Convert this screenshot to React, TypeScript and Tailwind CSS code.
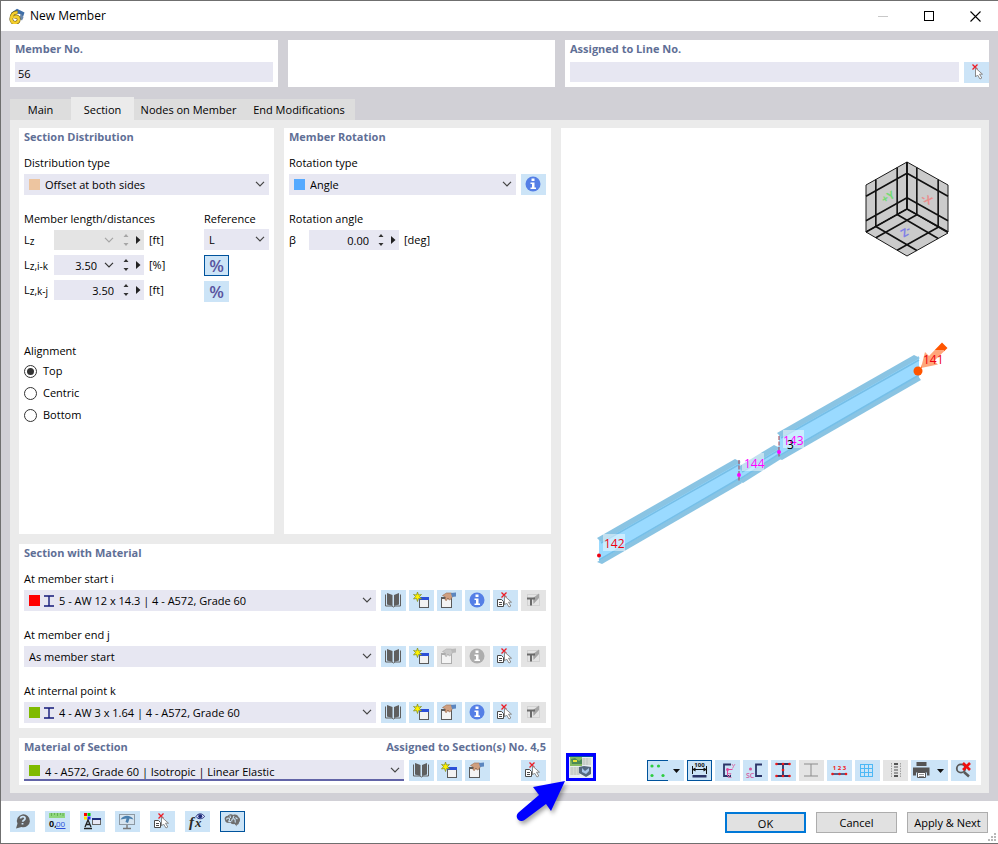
import { useState, type ReactNode } from 'react';
import clsx from 'clsx';

/* ---------- icons, all drawn on the 25x21 button face ---------- */

function Face({ children, className }: { children: ReactNode; className?: string }) {
  return (
    <svg viewBox="0 0 25 21" className={clsx('h-[21px] w-[25px] shrink-0', className)} fill="none" aria-hidden="true">
      {children}
    </svg>
  );
}

const RedCross = ({ x, y }: { x: number; y: number }) => (
  <path d={`M${x} ${y}l5 5m0 -5l-5 5`} stroke="#ee1c25" strokeWidth="1.3" />
);

const Cursor = ({ x, y }: { x: number; y: number }) => (
  <path
    d={`M${x} ${y}v9l2-2 2.5 4 1.8-1-2.3-3.8h3z`}
    fill="#fff"
    stroke="#8a8a8a"
    strokeWidth="1"
    strokeLinejoin="round"
  />
);

const BookIcon = () => (
  <Face>
    <path d="M4.5 4.5v11.5h6.5l1.5 1 1.5-1h5.500V4.500" stroke="#5f5f5f" />
    <path d="M6 3l5.500 2v11L6 14.500z" fill="#5f5f5f" />
    <path d="M18 3l-5 2v11l5-1.500z" fill="#5f5f5f" />
  </Face>
);

const NewIcon = () => (
  <Face>
    <rect x="10.500" y="7.500" width="9" height="10" fill="#f2f2f2" stroke="#5a5a5a" />
    <rect x="10" y="7" width="10" height="3" fill="#2b4fd8" />
    <path d="M8.500 2l1 3 3-.500-2 2 2 2.500-3-.500-1 3-1-3-3 .500 2-2.500-2-2 3 .500z" fill="#fff200" stroke="#7d8a1c" strokeWidth=".7" />
  </Face>
);

const EditIcon = ({ off }: { off?: boolean }) => (
  <Face>
    <rect x="4.500" y="7.500" width="10" height="10" fill="#f4f4f4" stroke={off ? '#adadad' : '#5a5a5a'} />
    <rect x="4" y="7" width="11" height="2" fill={off ? '#adadad' : '#5a5a5a'} />
    <path
      d="M5.500 5.500l4-2.500h5l1.500 3-2.500 3.500-1.500.500-1-2-1.500 2.500-1.500-.500.500-3z"
      fill={off ? '#c9c9c9' : '#cf9f80'}
      stroke={off ? '#adadad' : '#9c6b4e'}
      strokeWidth=".6"
    />
    <path d="M14 3l5-.500v4l-4 .500z" fill={off ? '#b9b9b9' : '#5b86c0'} />
  </Face>
);

const InfoIcon = ({ off }: { off?: boolean }) => (
  <Face>
    <circle cx="12" cy="10" r="7.500" fill={off ? '#adadad' : '#557fe6'} />
    <rect x="10.500" y="4.500" width="3" height="2.500" fill="#fff" />
    <path d="M9.500 8.500h4v5h1.500v1.500h-5.500v-1.500h1.500v-3.500h-1.500z" fill="#fff" />
  </Face>
);

const PickIcon = () => (
  <Face>
    <path d="M4.500 9.500h4l2 2v5h-6z" fill="#fff" stroke="#4a4a4a" />
    <path d="M6 12.500h3M6 14.500h3" stroke="#4a4a4a" />
    <RedCross x={8.500} y={2.500} />
    <Cursor x={11.500} y={6} />
  </Face>
);

const ClearLineIcon = () => (
  <Face>
    <RedCross x={8.500} y={2.500} />
    <Cursor x={11.500} y={6} />
  </Face>
);

const TrimIcon = () => (
  <Face>
    <rect x="6.500" y="4.500" width="12" height="11" stroke="#d2d2d2" />
    <path d="M12 8l6-4.500v4.500l-5.500 6z" fill="#a5a5a5" />
    <path d="M6 8.500h8M10 8.500v7" stroke="#6a6a6a" strokeWidth="2" />
  </Face>
);

const HelpIcon = () => (
  <Face>
    <path d="M6 17.500l1.500-5a6.500 6.500 0 1 1 4 3.500z" fill="#5f5f5f" />
    <path d="M10.500 7.500c.3-2.500 5-2.500 4.500.3-.3 1.500-2.300 1.400-2.300 3M12.500 12v1.500" stroke="#cce4f7" strokeWidth="1.800" />
  </Face>
);

const UnitsIcon = () => (
  <Face>
    <rect x="4" y="2" width="16" height="5" fill="#8fd67e" />
    <path d="M6.500 2v3M9.500 2v2M12.500 2v3M15.500 2v2M18 2v3" stroke="#5aa84b" strokeWidth=".8" />
    <text x="4" y="16" fontSize="9" fontWeight="700" fontFamily="Open Sans, sans-serif" fill="#111">0,</text>
    <text x="11" y="16" fontSize="8" fontFamily="Open Sans, sans-serif" fill="#2b4fd8">00</text>
    <path d="M11 17.500h9.500" stroke="#2b4fd8" />
  </Face>
);

const DisplayIcon = () => (
  <Face>
    <rect x="4" y="2" width="3" height="3" fill="#f00" />
    <rect x="7.500" y="2" width="3" height="3" fill="#0c0" />
    <rect x="4" y="5.500" width="3" height="3" fill="#ffe600" />
    <rect x="7.500" y="5.500" width="3" height="3" fill="#22f" />
    <path d="M5 16l3-7 3 7M6 13.500h4M4 17.500h8" stroke="#222" strokeWidth="1.300" />
    <rect x="12.500" y="7.500" width="8" height="6" fill="#e8e8f4" stroke="#666" />
    <rect x="12" y="7" width="9" height="2" fill="#1f2f80" />
  </Face>
);

const ScreenIcon = () => (
  <Face>
    <rect x="4.500" y="3.500" width="15" height="10" fill="#d6e4ef" stroke="#8d99a3" />
    <path d="M5.500 8.500c3-5 10-5 13 0l-4-1-1.500 4.500-2.500-1 1-3.500z" fill="#4a7fae" />
    <path d="M12 14v3M8 17.500h8" stroke="#777" strokeWidth="1.400" />
  </Face>
);

const FormulaIcon = () => (
  <Face>
    <text x="4" y="16" fontSize="15" fontStyle="italic" fontWeight="700" fontFamily="Liberation Serif, serif" fill="#2a2a2a">f</text>
    <text x="10" y="16" fontSize="13" fontStyle="italic" fontWeight="700" fontFamily="Liberation Serif, serif" fill="#2a2a2a">x</text>
    <path d="M11 5.500c2-3.500 6.500-3.500 8.500 0-2 3-6.500 3-8.500 0z" fill="#dfe4ff" stroke="#1e2a78" />
    <circle cx="15.200" cy="5.200" r="2" fill="#1e2a78" />
  </Face>
);

const BrainIcon = () => (
  <Face>
    <path
      d="M5 9c-1-2 .5-4 2.500-4C9 3 12 3 13 4c2.500-1 5 0 5.500 2 2 1 2 4 .5 5.500 0 2-1.500 2.500-2.500 2.300l.5 1.700-2.500-2.500c-2 .5-3.500-.2-4-1.500C8 12.500 5 11.500 5 9z"
      fill="#6f6f6f"
    />
    <path
      d="M6.500 8.500c.5-2 2.500-2 3-.500s-1.500 2-.5 3M10 4.500l.5 2.500M12 10.500c-1-2 1-3.500 2.500-2.500s0 2.500 1 3.500M14 5l-1 2M9 10.500h2M15.500 6.500l2 1.500"
      stroke="#cce4f7"
      strokeWidth="1.100"
    />
  </Face>
);

const NodesIcon = () => (
  <Face>
    {[[4, 6], [10.500, 6], [4, 15.500], [15, 15.500]].map(([x, y]) => (
      <circle key={`${x}-${y}`} cx={x} cy={y} r="1.600" fill="#2ecc40" />
    ))}
  </Face>
);

const DimensionIcon = () => (
  <Face>
    <text x="12.500" y="7" fontSize="6" fontWeight="700" textAnchor="middle" fontFamily="Open Sans, sans-serif" fill="#111">100</text>
    <path d="M5.500 6v8M19.500 6v8M5 9.500h15" stroke="#111" />
    <path d="M5 9.500l3.500-2v4zM20 9.500l-3.500-2v4z" fill="#111" />
    <rect x="5.500" y="15" width="14" height="2.500" fill="#2c3568" />
  </Face>
);

const AxesIcon = () => (
  <Face>
    <path d="M16 4.500H9V16h7" stroke="#2c3568" strokeWidth="1.800" />
    <path d="M12.500 16V9.500h5" stroke="#e0489c" />
    <circle cx="12.500" cy="9.500" r="1.500" fill="#e0489c" />
    <path d="M17 4l1.500 2.500L20 4M18.500 6.500l-1 2M13 13.500h3l-3 4h3.500" stroke="#d77fb4" />
  </Face>
);

const ShearCenterIcon = () => (
  <Face>
    <path d="M19 4.500h-6v11.500h6" stroke="#2c3568" strokeWidth="1.800" />
    <circle cx="7.500" cy="9" r="1.500" fill="#d4559c" />
    <text x="3" y="18" fontSize="7" fontWeight="600" fontFamily="Open Sans, sans-serif" fill="#d4559c">SC</text>
  </Face>
);

const BeamIcon = ({ off }: { off?: boolean }) => (
  <Face>
    <path d="M5 4h14M5 16h14M12 4v12" stroke={off ? '#8c8c8c' : '#2c3568'} strokeWidth={off ? 1 : 1.800} />
    {!off &&
      [[5.500, 4], [12, 4], [18.500, 4], [12, 10], [5.500, 16], [12, 16], [18.500, 16]].map(([x, y]) => (
        <circle key={`${x}-${y}`} cx={x} cy={y} r="1.300" fill="#f01818" />
      ))}
  </Face>
);

const NumberingIcon = () => (
  <Face>
    <text x="12.500" y="10" fontSize="6" fontWeight="700" textAnchor="middle" fontFamily="Open Sans, sans-serif" fill="#f01818">1 2 3</text>
    <path d="M5 14h15" stroke="#2c3568" strokeWidth="1.500" />
    <circle cx="5.500" cy="14" r="1.300" fill="#f01818" />
    <circle cx="12.500" cy="14" r="1.300" fill="#f01818" />
    <circle cx="19" cy="14" r="1.300" fill="#f01818" />
  </Face>
);

const GridIcon = () => (
  <Face>
    <path d="M6 4.500h12M6 8.500h12M6 12.500h12M6 16.500h12M5.500 4v13M9.500 4v13M13.500 4v13M17.500 4v13" stroke="#4db8f5" />
  </Face>
);

const SlicesIcon = () => (
  <Face>
    <path d="M11 4h4M11 16h4" stroke="#555" strokeWidth="2" />
    <path d="M11 7h4M11 10h4M11 13h4" stroke="#9a9a9a" strokeWidth="2" />
    <path d="M8.500 3v15M17.500 3v15" stroke="#a0a0a0" strokeDasharray="1.500 1" />
  </Face>
);

const PrinterIcon = () => (
  <Face>
    <path d="M5.500 2h10v4h-10zM2 7.500h16.500v8H16v-3H5v3H2z" fill="#555" />
    <path d="M6.500 12.500h8v5h-8z" fill="#fff" stroke="#555" />
    <path d="M8 14.500h5M8 16.500h5" stroke="#777" strokeWidth=".8" />
  </Face>
);

const ResetViewIcon = () => (
  <Face>
    <circle cx="10" cy="8.500" r="4.200" stroke="#5a5a5a" strokeWidth="1.800" />
    <path d="M13 12l5 4.500" stroke="#5a5a5a" strokeWidth="2.500" />
    <path d="M12 3l7 7m0-7l-7 7" stroke="#f01010" strokeWidth="2.600" />
  </Face>
);

const AppIcon = () => (
  <svg viewBox="0 0 16 16" className="size-4" fill="none" aria-hidden="true">
    <path d="M2 5L8 .800 15.500 4.500 14 9l-3-3z" fill="#3f6ea8" />
    <path d="M12 5.500l2.500 4-1.500 3-3-2z" fill="#6b87ab" />
    <path d="M8.500 4.500C5 4.200 2.300 6.500 2.300 11c0 5.200 7.400 5 7.400.500 0-3.500-4-3.600-5-1.500" stroke="#6b5a12" strokeWidth="3.800" />
    <path d="M8.500 4.500C5 4.200 2.300 6.500 2.300 11c0 5.200 7.400 5 7.400.500 0-3.500-4-3.600-5-1.500" stroke="#f5cf2e" strokeWidth="2.600" />
  </svg>
);

const ProfileIcon = () => (
  <svg viewBox="0 0 10 12" className="h-3 w-[10px]" fill="none" aria-hidden="true">
    <path d="M0 1h10M0 11h10M5 1v10" stroke="#151a7a" strokeWidth="1.400" />
  </svg>
);

const Chevron = ({ className }: { className?: string }) => (
  <svg viewBox="0 0 10 6" className={clsx('h-[6px] w-[10px]', className)} fill="none" aria-hidden="true">
    <path d="M1 .800l4 4 4-4" stroke="currentColor" strokeWidth="1.200" />
  </svg>
);

/* ---------- controls ---------- */

function IconButton({ label, off, active, children }: { label: string; off?: boolean; active?: boolean; children: ReactNode }) {
  return (
    <button
      type="button"
      aria-label={label}
      disabled={off}
      className={clsx(
        'relative h-[21px] w-[25px] shrink-0',
        off ? 'bg-[#e4e4e4]' : 'bg-[#cce4f7]',
        active && 'outline outline-1 -outline-offset-1 outline-[#00539c]'
      )}
    >
      {children}
    </button>
  );
}

function MenuButton({ label, active, children }: { label: string; active?: boolean; children: ReactNode }) {
  return (
    <button type="button" aria-label={label} className="flex h-[21px] w-[37px] shrink-0 items-center bg-[#cce4f7]">
      <span className={clsx('flex h-full w-[21px] items-center', active && 'border border-r-0 border-[#00539c]')}>
        {children}
      </span>
      <svg viewBox="0 0 8 4" className="ml-[5px] h-1 w-2" aria-hidden="true">
        <path d="M0 0h7L3.500 4z" fill="#111" />
      </svg>
    </button>
  );
}

type SelectProps = {
  id: string;
  value: string;
  swatch?: 'peach' | 'blue' | 'red' | 'green';
  profile?: boolean;
  focused?: boolean;
  className?: string;
};

const swatches = {
  peach: 'bg-[#edc5a0]',
  blue: 'bg-[#55aaff]',
  red: 'bg-[#ff0000]',
  green: 'bg-[#7fba00]',
};

function Select({ id, value, swatch, profile, focused, className }: SelectProps) {
  return (
    <div className={clsx('relative h-[21px] min-w-0 bg-[#e7e7f2]', className)}>
      <select
        id={id}
        defaultValue={value}
        className={clsx(
          'block h-full w-full appearance-none pr-5 outline-none',
          !swatch && 'pl-[5px]',
          swatch && !profile && 'pl-[21px]',
          profile && 'pl-[35px]',
          focused ? 'border-b-2 border-[#6264a7] pt-1' : 'pt-[2px]'
        )}
      >
        <option>{value}</option>
      </select>
      {swatch && (
        <span className="pointer-events-none absolute inset-y-0 left-[5px] flex items-center gap-1">
          <span className={clsx('size-[11px]', swatches[swatch])} />
          {profile && <ProfileIcon />}
        </span>
      )}
      <Chevron className="pointer-events-none absolute right-1 top-[7px] text-[#444]" />
    </div>
  );
}

function NumberField({ label, value, list, off }: { label: string; value: string; list?: boolean; off?: boolean }) {
  const [text, setText] = useState(value);

  return (
    <div className={clsx('flex h-5 w-[90px] items-center', off ? 'bg-[#e4e4e4] text-[#a5a5a5]' : 'bg-[#e7e7f2] text-[#333]')}>
      <input
        aria-label={label}
        value={text}
        disabled={off}
        onChange={(e) => setText(e.target.value)}
        className="min-w-0 flex-1 pt-[2px] text-right text-black outline-none"
      />
      {list && <Chevron className="ml-[7px]" />}
      <button type="button" aria-label={`${label} step`} disabled={off} className="ml-2 flex w-2 justify-center">
        <svg viewBox="0 0 6 12" className="h-3 w-[6px]" fill="currentColor" aria-hidden="true">
          <path d="M3 0l2.500 3h-5zM3 12l2.500-3h-5z" />
        </svg>
      </button>
      <button type="button" aria-label={`${label} more`} className="ml-1 mr-[2px] flex w-2 justify-center text-[#222]">
        <svg viewBox="0 0 5 8" className="h-2 w-[5px]" fill="currentColor" aria-hidden="true">
          <path d="M0 0l4.500 4L0 8z" />
        </svg>
      </button>
    </div>
  );
}

const Heading = ({ children }: { children: ReactNode }) => (
  <h2 className="h-[18px] font-bold leading-[18px] text-[#5f6f96]">{children}</h2>
);

/* ---------- 3D preview ---------- */

type Pt = [number, number];

// one visible side of the orientation cube, split into 3x3 tiles
function CubeFace({ o, u, v }: { o: Pt; u: Pt; v: Pt }) {
  const at = (a: number, b: number) => `${o[0] + u[0] * a + v[0] * b} ${o[1] + u[1] * a + v[1] * b}`;
  const stops = [0.24, 0.76];
  return (
    <g>
      <path d={`M${at(0, 0)}L${at(1, 0)}L${at(1, 1)}L${at(0, 1)}z`} fill="#cbcbcb" stroke="#1a1a1a" strokeWidth="1" />
      {stops.map((s) => (
        <path key={s} d={`M${at(s, 0)}L${at(s, 1)}M${at(0, s)}L${at(1, s)}`} stroke="#111" strokeWidth="1.600" />
      ))}
    </g>
  );
}

function Beam({ x1, y1, x2, y2, h }: { x1: number; y1: number; x2: number; y2: number; h: number }) {
  return (
    <g>
      <path d={`M${x1} ${y1 + 3}L${x2} ${y2}V${y2 + h - 4}L${x1} ${y1 + h}z`} fill="#9adaff" />
      <path d={`M${x1 - 2} ${y1 + 1}L${x2 - 5} ${y2 - 1}L${x2 + 1} ${y2 + 2}L${x1 + 2} ${y1 + 5}z`} fill="#8ac4e3" />
      <path d={`M${x1 + 2} ${y1 + 6}L${x2} ${y2 + 4}`} stroke="#76bfe8" strokeWidth="1.500" />
      <path d={`M${x1 - 2} ${y1 + h}L${x2 - 1} ${y2 + h - 6}L${x2 + 2} ${y2 + h - 2}L${x1 + 3} ${y1 + h + 2}z`} fill="#8ac4e3" />
      <path d={`M${x1} ${y1 + h - 2}L${x2} ${y2 + h - 7}`} stroke="#76bfe8" strokeWidth="1.500" />
    </g>
  );
}

function Scene() {
  return (
    <svg viewBox="561 128 420 625" preserveAspectRatio="xMidYMid meet" className="h-full w-full" fill="none" role="img" aria-label="Member preview">
      <CubeFace o={[907, 162]} u={[-41, 23]} v={[0, 47]} />
      <CubeFace o={[907, 162]} u={[41, 23]} v={[0, 47]} />
      <CubeFace o={[907, 209]} u={[-41, 23]} v={[41, 24]} />
      <path d="M907 162v47M907 209l-41 23M907 209l41 23" stroke="#111" strokeWidth="1.800" />
      <g fontFamily="Open Sans, sans-serif" fontSize="11" fontWeight="700" textAnchor="middle">
        <text transform="rotate(-30 888 197)" x="888" y="201" fill="#74dc74">+Y</text>
        <text transform="rotate(30 927 199)" x="927" y="203" fill="#ea8f8f">-X</text>
        <text transform="rotate(150 906 232)" x="906" y="236" fill="#8080e6">-Z</text>
      </g>

      <Beam x1={740} y1={466} x2={779} y2={446} h={15} />
      <Beam x1={599} y1={537} x2={740} y2={460} h={25} />
      <Beam x1={779} y1={432} x2={919} y2={356} h={26} />
      <path d="M739 460v22M779 436v22" stroke="#a33a4a" strokeDasharray="4 1.500" />

      <path d="M921 368l4-16 4 4L942 342.500l5.500 5.500L934 361l4 3.500z" fill="#ff5500" />
      <g fill="#fff" fillOpacity=".48">
        <rect x="922" y="350" width="22" height="18" />
        <rect x="783" y="430" width="21" height="18" />
        <rect x="742" y="453" width="22" height="18" />
        <rect x="603" y="534" width="22" height="17" />
      </g>
      <circle cx="918" cy="371" r="4.500" fill="#ff5500" />
      <circle cx="779" cy="452" r="2" fill="#ff00ff" />
      <circle cx="739" cy="475" r="2" fill="#ff00ff" />
      <circle cx="599" cy="555.500" r="2" fill="#ee0011" />
      <g fontFamily="Open Sans, sans-serif" fontSize="12">
        <text x="923" y="364" fill="#ee0011">141</text>
        <text x="783" y="445" fill="#ff00ff">143</text>
        <text x="787" y="449" fill="#000">3</text>
        <text x="744" y="468" fill="#ff00ff">144</text>
        <text x="604" y="548" fill="#ee0011">142</text>
      </g>
    </svg>
  );
}

// pointer that runs from the footer up to the highlighted view button
const Pointer = () => (
  <svg viewBox="0 0 56 48" className="pointer-events-none absolute right-full top-full z-10 h-12 w-14 drop-shadow-[2px_3px_2px_rgba(0,0,0,0.35)]" aria-hidden="true">
    <path d="M55 0L41 30L36 23L14.500 39a4.700 4.700 0 0 1-6-7.500L29 14L23 6z" fill="#0000ff" />
  </svg>
);

/* ---------- dialog parts ---------- */

function SectionRow({ id, label, children, info }: { id: string; label: string; children: ReactNode; info: boolean }) {
  return (
    <div>
      <label htmlFor={id} className="block h-[18px] leading-[18px]">{label}</label>
      <div className="mt-[2px] flex gap-[3px]">
        <div className="mr-[2px] min-w-0 flex-1">{children}</div>
        <IconButton label="Section library"><BookIcon /></IconButton>
        <IconButton label="New section"><NewIcon /></IconButton>
        <IconButton label="Edit section" off={!info}><EditIcon off={!info} /></IconButton>
        <IconButton label="Section info" off={!info}><InfoIcon off={!info} /></IconButton>
        <IconButton label="Pick section"><PickIcon /></IconButton>
        <IconButton label="Taper" off><TrimIcon /></IconButton>
      </div>
    </div>
  );
}

const distances = [
  { sub: 'z', value: '', unit: '[ft]', list: true, off: true },
  { sub: 'z,i-k', value: '3.50', unit: '[%]', list: true, off: false },
  { sub: 'z,k-j', value: '3.50', unit: '[ft]', list: false, off: false },
];

function SectionDistribution() {
  const [alignment, setAlignment] = useState('Top');

  return (
    <section className="bg-white px-[5px]">
      <Heading>Section Distribution</Heading>
      <label htmlFor="distribution" className="mt-2 block h-[18px] leading-[18px]">Distribution type</label>
      <Select id="distribution" value="Offset at both sides" swatch="peach" className="mt-[2px]" />

      <div className="mt-[15px] flex justify-between">
        <div>
          <h3 className="h-[18px] leading-[18px]">Member length/distances</h3>
          <div className="mt-[2px] flex flex-col gap-[5px]">
            {distances.map((d) => (
              <div key={d.sub} className="flex items-center">
                <span className="w-[30px]">
                  L<span className="relative top-px text-[10px]">{d.sub}</span>
                </span>
                <NumberField label={`L ${d.sub}`} value={d.value} list={d.list} off={d.off} />
                <span className="ml-[5px]">{d.unit}</span>
              </div>
            ))}
          </div>
        </div>
        <div className="w-[65px]">
          <label htmlFor="reference" className="block h-[18px] leading-[18px]">Reference</label>
          <Select id="reference" value="L" className="mt-[1px]" />
          <div className="mt-[5px] flex flex-col gap-[5px] text-[17px] font-semibold leading-[21px] text-[#5a55a0]">
            <IconButton label="Relative distance i-k" active>%</IconButton>
            <IconButton label="Relative distance k-j">%</IconButton>
          </div>
        </div>
      </div>

      <fieldset className="mt-[40px]">
        <legend className="h-[18px] leading-[18px]">Alignment</legend>
        {['Top', 'Centric', 'Bottom'].map((name) => (
          <label key={name} className="flex h-[22px] items-center gap-[6px]">
            <input
              type="radio"
              name="alignment"
              checked={alignment === name}
              onChange={() => setAlignment(name)}
              className="size-[13px] appearance-none rounded-full border border-[#333] checked:border-[#333] checked:bg-[#333] checked:bg-clip-content checked:p-[2px]"
            />
            {name}
          </label>
        ))}
      </fieldset>
    </section>
  );
}

function MemberRotation() {
  return (
    <section className="bg-white px-[5px]">
      <Heading>Member Rotation</Heading>
      <label htmlFor="rotation" className="mt-2 block h-[18px] leading-[18px]">Rotation type</label>
      <div className="mt-[2px] flex gap-[5px]">
        <Select id="rotation" value="Angle" swatch="blue" className="flex-1" />
        <IconButton label="Rotation info"><InfoIcon /></IconButton>
      </div>
      <h3 className="mt-[15px] h-[18px] leading-[18px]">Rotation angle</h3>
      <div className="mt-[2px] flex items-center">
        <span className="w-5">β</span>
        <NumberField label="Rotation angle" value="0.00" />
        <span className="ml-[5px]">[deg]</span>
      </div>
    </section>
  );
}

function Preview() {
  return (
    <section className="flex min-w-0 flex-col bg-white pb-1">
      <div className="min-h-0 flex-1">
        <Scene />
      </div>
      <div className="flex items-end justify-between pl-[5px] pr-[5px]">
        <div className="relative">
          <button type="button" aria-label="Toggle rendering" className="block border-[3px] border-[#0000ff] bg-[#e9eef2]">
            <svg viewBox="0 0 24 22" className="h-[22px] w-6" fill="none" aria-hidden="true">
              <path d="M1 1h12v9H1z" fill="#86bb62" />
              <path d="M2 3l4-1 4 3 3-2v5H3z" fill="#4b8a55" />
              <path d="M4 4h4v2H4z" fill="#e6e23a" />
              <path d="M13 2h9v7h-9zM1 11h10v8H1z" fill="#d5dad2" />
              <path d="M15 2v7M18 2v7M3 11v8M6 11v8M9 11v8" stroke="#bcc4c0" />
              <path d="M10 11l5-1 7 1v7l-5 3-7-4z" fill="#55697f" />
              <path d="M13 12l3 3 4-3v3l-3 3-4-2z" fill="#a9c6ea" />
              <path d="M0 .500h24" stroke="#00539c" />
            </svg>
          </button>
          <Pointer />
        </div>
        <div className="flex gap-[3px]">
          <MenuButton label="Node display" active><NodesIcon /></MenuButton>
          <IconButton label="Dimensions" active><DimensionIcon /></IconButton>
          <IconButton label="Local axes"><AxesIcon /></IconButton>
          <IconButton label="Shear center"><ShearCenterIcon /></IconButton>
          <IconButton label="Section points"><BeamIcon /></IconButton>
          <IconButton label="Section outline" off><BeamIcon off /></IconButton>
          <IconButton label="Numbering"><NumberingIcon /></IconButton>
          <IconButton label="Grid"><GridIcon /></IconButton>
          <IconButton label="Slices" off><SlicesIcon /></IconButton>
          <MenuButton label="Print"><PrinterIcon /></MenuButton>
          <IconButton label="Reset view"><ResetViewIcon /></IconButton>
        </div>
      </div>
    </section>
  );
}

const tabs = ['Main', 'Section', 'Nodes on Member', 'End Modifications'];
const tabWidths = ['w-[61px]', 'w-[63px]', 'w-[109px]', 'w-[112px]'];

export default function App() {
  const [tab, setTab] = useState('Section');

  return (
    <div className="flex min-h-screen flex-col border-y border-l border-[#6f6f6f] bg-[#d1d0d6] font-['Open_Sans',sans-serif] text-[11px] text-black">
      <header className="flex h-[30px] items-center bg-white pl-2">
        <AppIcon />
        <h1 className="ml-[5px] flex-1 text-xs">New Member</h1>
        <button type="button" aria-label="Minimize" disabled className="flex w-[46px] justify-center">
          <span className="h-px w-[10px] bg-[#c8c8c8]" />
        </button>
        <button type="button" aria-label="Maximize" className="flex w-[46px] justify-center">
          <span className="size-[10px] border border-black" />
        </button>
        <button type="button" aria-label="Close" className="flex w-[46px] justify-center">
          <svg viewBox="0 0 11 11" className="size-[11px]" fill="none" aria-hidden="true">
            <path d="M.500 .500l10 10m0-10l-10 10" stroke="#000" strokeWidth="1.100" />
          </svg>
        </button>
      </header>

      <main className="flex flex-1 flex-col pb-2 pl-[9px] pr-[9px] pt-[9px]">
        <div className="grid h-[47px] grid-cols-[268fr_267fr_424fr] gap-[10px]">
          <section className="bg-white px-[5px]">
            <Heading><label htmlFor="member-no">Member No.</label></Heading>
            <input id="member-no" defaultValue="56" className="mt-1 block h-5 w-full bg-[#e7e7f2] px-[3px] pt-[2px] outline-none" />
          </section>
          <section className="bg-white" />
          <section className="bg-white pl-[5px]">
            <Heading><label htmlFor="line-no">Assigned to Line No.</label></Heading>
            <div className="mt-1 flex gap-[5px]">
              <input id="line-no" className="h-5 min-w-0 flex-1 bg-[#e7e7f2] px-[3px] outline-none" />
              <IconButton label="Pick line"><ClearLineIcon /></IconButton>
            </div>
          </section>
        </div>

        <div role="tablist" className="mt-[10px] flex items-end">
          {tabs.map((name, i) => (
            <button
              key={name}
              type="button"
              role="tab"
              aria-selected={tab === name}
              onClick={() => setTab(name)}
              className={clsx('whitespace-nowrap', tabWidths[i], tab === name ? 'h-[23px] bg-[#ebebeb] pt-1' : 'h-[21px] bg-[#dddddd] pt-[2px]')}
            >
              {name}
            </button>
          ))}
        </div>

        <div className="grid flex-1 grid-cols-[532fr_420fr] gap-[10px] bg-[#ebebeb] px-2 py-2 pl-[9px]">
          <div className="flex min-w-0 flex-col gap-[10px]">
            <div className="grid flex-1 grid-cols-[255fr_267fr] gap-[10px]">
              <SectionDistribution />
              <MemberRotation />
            </div>

            <section className="bg-white px-[5px] pb-[5px]">
              <Heading>Section with Material</Heading>
              <div className="mt-2 flex flex-col gap-[15px]">
                <SectionRow id="start" label="At member start i" info>
                  <Select id="start" value="5 - AW 12 x 14.3 | 4 - A572, Grade 60" swatch="red" profile />
                </SectionRow>
                <SectionRow id="end" label="At member end j" info={false}>
                  <Select id="end" value="As member start" />
                </SectionRow>
                <SectionRow id="internal" label="At internal point k" info>
                  <Select id="internal" value="4 - AW 3 x 1.64 | 4 - A572, Grade 60" swatch="green" profile />
                </SectionRow>
              </div>
            </section>

            <section className="h-[47px] bg-white px-[5px]">
              <div className="flex justify-between">
                <Heading><label htmlFor="material">Material of Section</label></Heading>
                <p className="font-bold leading-[18px] text-[#5f6f96]">Assigned to Section(s) No. 4,5</p>
              </div>
              <div className="mt-1 flex gap-[3px]">
                <Select id="material" value="4 - A572, Grade 60 | Isotropic | Linear Elastic" swatch="green" focused className="mr-[2px] flex-1" />
                <IconButton label="Material library"><BookIcon /></IconButton>
                <IconButton label="New material"><NewIcon /></IconButton>
                <IconButton label="Edit material"><EditIcon /></IconButton>
                <span className="w-[25px]" />
                <IconButton label="Pick material"><PickIcon /></IconButton>
              </div>
            </section>
          </div>

          <Preview />
        </div>
      </main>

      <footer className="relative flex h-[42px] items-start justify-between bg-white pl-[9px] pr-[10px] pt-[10px]">
        <div className="flex gap-[10px]">
          <IconButton label="Help"><HelpIcon /></IconButton>
          <IconButton label="Units"><UnitsIcon /></IconButton>
          <IconButton label="Display properties"><DisplayIcon /></IconButton>
          <IconButton label="View"><ScreenIcon /></IconButton>
          <IconButton label="Pick"><PickIcon /></IconButton>
          <IconButton label="Formula"><FormulaIcon /></IconButton>
          <IconButton label="Assistant" active><BrainIcon /></IconButton>
        </div>
        <div className="mt-px flex gap-[10px]">
          <button type="button" className="h-[21px] w-[81px] border-2 border-[#0078d7] bg-[#e1e1e1] pt-[2px]">OK</button>
          <button type="button" className="h-[21px] w-[81px] border border-[#adadad] bg-[#e1e1e1] pt-[2px]">Cancel</button>
          <button type="button" className="h-[21px] w-[81px] whitespace-nowrap border border-[#adadad] bg-[#e1e1e1] pt-[2px]">Apply &amp; Next</button>
        </div>
        <svg viewBox="0 0 8 8" className="absolute bottom-[2px] right-[2px] size-2" fill="#b8b8b8" aria-hidden="true">
          <path d="M6 0h2v2H6zM3 3h2v2H3zM6 3h2v2H6zM0 6h2v2H0zM3 6h2v2H3zM6 6h2v2H6z" />
        </svg>
      </footer>
    </div>
  );
}
